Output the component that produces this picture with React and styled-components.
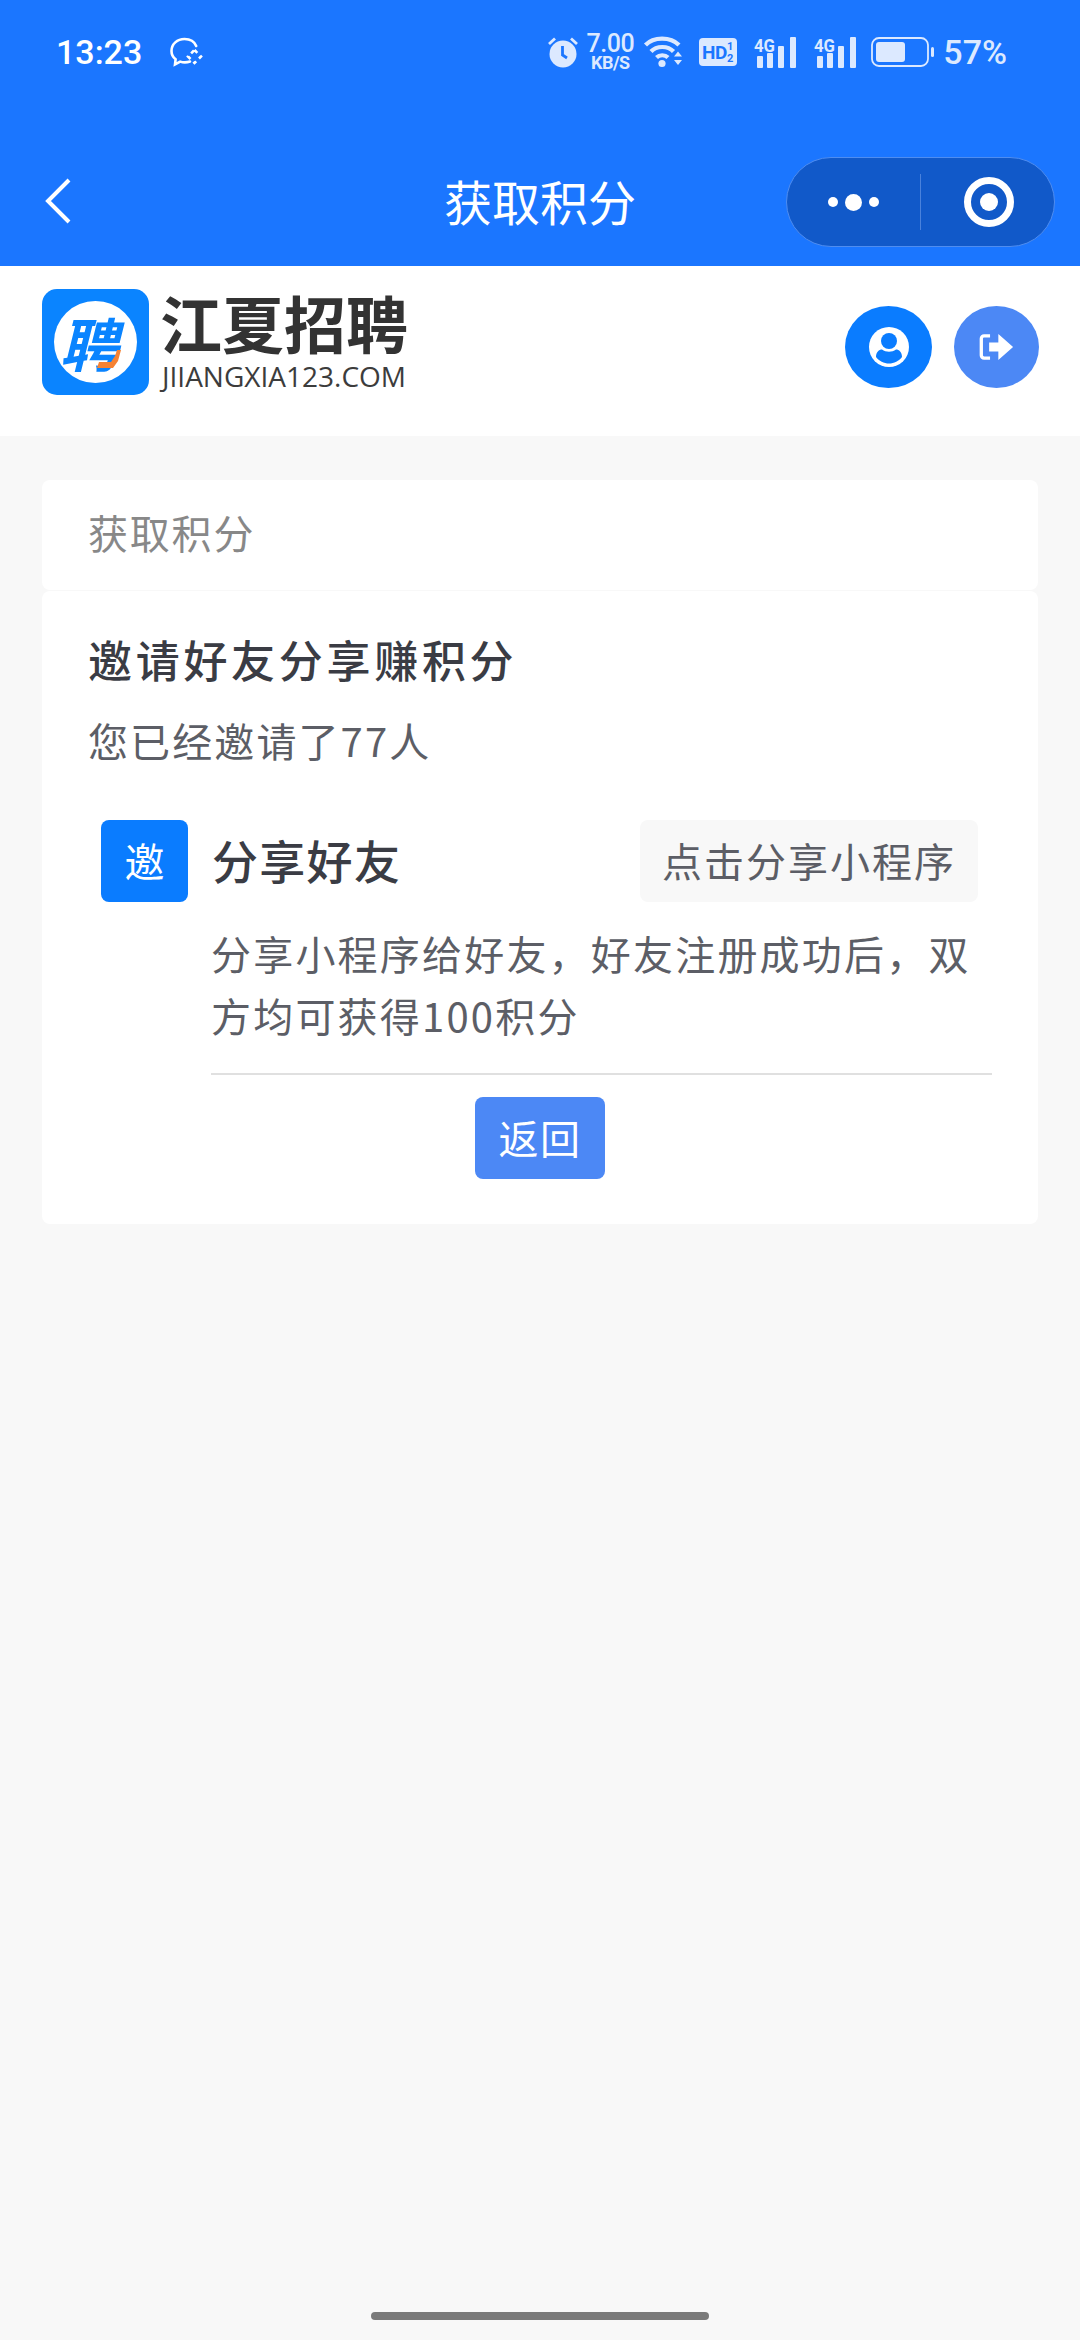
import React from "react";
import styled, { createGlobalStyle } from "styled-components";

const GlobalStyle = createGlobalStyle`
  html, body {
    margin: 0;
    padding: 0;
    background: #f8f8f8;
  }
  * {
    box-sizing: border-box;
  }
`;

const Page = styled.div`
  display: flex;
  flex-direction: column;
  width: 1080px;
  height: 2340px;
  overflow: hidden;
  background: #f8f8f8;
  font-family: "Noto Sans CJK SC", "Noto Sans", sans-serif;
`;

const TopArea = styled.div`
  background: #1b76ff;
  color: #fff;
`;

// Status bar
const StatusBar = styled.div`
  display: flex;
  justify-content: space-between;
  align-items: center;
  height: 138px;
  padding: 0 73px 34px 56px;
`;

const StatusLeft = styled.div`
  display: flex;
  align-items: center;
  gap: 28px;
`;

const Clock = styled.span`
  font-family: Roboto, sans-serif;
  font-weight: 500;
  font-size: 34px;
  line-height: 40px;
`;

const StatusRight = styled.div`
  display: flex;
  align-items: center;
  color: #dce9ff;
`;

const StatusIcon = styled.svg`
  display: block;
  flex: none;
  margin-left: ${(p) => p.$gap || 0}px;
  overflow: visible;
`;

const Speed = styled.div`
  display: flex;
  flex-direction: column;
  align-items: center;
  width: 46px;
  margin-left: 9px;
  font-family: Roboto, sans-serif;
  font-weight: 500;
  letter-spacing: -0.5px;
`;

const SpeedValue = styled.span`
  font-size: 25px;
  line-height: 20px;
`;

const SpeedUnit = styled.span`
  font-size: 18px;
  font-weight: 700;
  line-height: 16px;
  margin-top: 1px;
  white-space: nowrap;
`;

const BatteryText = styled.span`
  margin-left: 9px;
  font-family: Roboto, sans-serif;
  font-weight: 500;
  font-size: 34px;
  line-height: 40px;
`;

// Nav bar
const NavBar = styled.div`
  display: grid;
  grid-template-columns: 1fr auto 1fr;
  align-items: center;
  height: 128px;
`;

const BackButton = styled.svg`
  display: block;
  margin: 0 0 2px 45px;
`;

const NavTitle = styled.div`
  margin-bottom: 4px;
  font-size: 48px;
  line-height: 60px;
  font-weight: 400;
`;

const Capsule = styled.div`
  justify-self: end;
  display: flex;
  align-items: center;
  width: 269px;
  height: 90px;
  margin-right: 25px;
  background: #1159c9;
  border: 1px solid #4f8df0;
  border-radius: 45px;
`;

const CapsuleMore = styled.div`
  display: flex;
  align-items: center;
  justify-content: center;
  gap: 7px;
  width: 134px;
  height: 56px;
  border-right: 1px solid #4a82dc;
`;

const Dot = styled.span`
  width: ${(p) => (p.$big ? 17 : 10)}px;
  height: ${(p) => (p.$big ? 17 : 10)}px;
  border-radius: 50%;
  background: #fff;
`;

const CapsuleClose = styled.div`
  flex: 1;
  display: flex;
  justify-content: center;
  padding-left: 3px;
`;

const Target = styled.div`
  display: flex;
  align-items: center;
  justify-content: center;
  width: 50px;
  height: 50px;
  border: 7px solid #fff;
  border-radius: 50%;

  &::after {
    content: "";
    width: 18px;
    height: 18px;
    border-radius: 50%;
    background: #fff;
  }
`;

// Site header
const SiteHeader = styled.div`
  display: flex;
  justify-content: space-between;
  align-items: flex-start;
  height: 170px;
  padding: 23px 41px 0 42px;
  background: #fff;
`;

const Brand = styled.div`
  display: flex;
  gap: 11px;
`;

const LogoTile = styled.div`
  display: flex;
  align-items: center;
  justify-content: center;
  width: 107px;
  height: 106px;
  background: #0a84ff;
  border-radius: 15px;
`;

const LogoCircle = styled.div`
  position: relative;
  display: flex;
  align-items: center;
  justify-content: center;
  width: 83px;
  height: 82px;
  background: #fff;
  border-radius: 50%;
`;

const LogoGlyph = styled.span`
  font-size: 58px;
  line-height: 60px;
  font-weight: 700;
  color: #0a84ff;
  transform: skewX(-14deg);
`;

const LogoHook = styled.svg`
  position: absolute;
  right: 16px;
  bottom: 14px;
`;

const BrandText = styled.div`
  display: flex;
  flex-direction: column;
`;

const BrandName = styled.div`
  font-size: 62px;
  line-height: 66px;
  font-weight: 700;
  color: #333;
`;

const BrandDomain = styled.div`
  margin: 6px 0 0 2px;
  font-family: "Open Sans", sans-serif;
  font-size: 28px;
  line-height: 30px;
  color: #3c3c3c;
`;

const HeaderActions = styled.div`
  display: flex;
  gap: 22px;
  margin-top: 17px;
`;

const RoundButton = styled.div`
  display: flex;
  align-items: center;
  justify-content: center;
  width: ${(p) => (p.$soft ? 85 : 87)}px;
  height: 82px;
  border-radius: 50%;
  background: ${(p) => (p.$soft ? "#4c88f5" : "#0a7cff")};
`;

// Content
const Main = styled.div`
  display: flex;
  flex-direction: column;
  gap: 1px;
  padding: 44px 42px 0;
`;

const CardHead = styled.div`
  height: 110px;
  padding-left: 46px;
  font-size: 40px;
  line-height: 104px;
  letter-spacing: 1.8px;
  color: #888;
  background: #fff;
  border-radius: 8px;
`;

const CardBody = styled.div`
  padding: 38px 46px 45px;
  background: #fff;
  border-radius: 8px;
`;

const CardTitle = styled.div`
  font-size: 44px;
  line-height: 60px;
  font-weight: 500;
  letter-spacing: 3.7px;
  color: #3a3c44;
`;

const CardSub = styled.div`
  margin-top: 21px;
  font-size: 40px;
  line-height: 60px;
  letter-spacing: 2.1px;
  color: #5c5e66;
`;

const ShareRow = styled.div`
  display: flex;
  align-items: center;
  margin: 50px 14px 0 13px;
`;

const Badge = styled.div`
  display: flex;
  align-items: center;
  justify-content: center;
  width: 87px;
  height: 82px;
  margin-right: 24px;
  padding-bottom: 3px;
  font-size: 40px;
  color: #fff;
  background: #0a7cff;
  border-radius: 8px;
`;

const ShareName = styled.div`
  flex: 1;
  margin-bottom: 5px;
  font-size: 46px;
  line-height: 60px;
  font-weight: 500;
  letter-spacing: 1.3px;
  color: #3a3c44;
`;

const ShareButton = styled.div`
  display: flex;
  align-items: center;
  justify-content: center;
  width: 338px;
  height: 82px;
  padding-bottom: 3px;
  font-size: 40px;
  letter-spacing: 2px;
  color: #5c5e66;
  background: #f8f8f8;
  border-radius: 8px;
`;

const ShareDesc = styled.div`
  margin: 20px 0 0 123px;
  padding-bottom: 27px;
  font-size: 40px;
  line-height: 62px;
  letter-spacing: 2.2px;
  color: #5c5e66;
  border-bottom: 2px solid #e0e0e0;
`;

const BackRow = styled.div`
  display: flex;
  justify-content: center;
  margin-top: 22px;
`;

const ReturnButton = styled.div`
  display: flex;
  align-items: center;
  justify-content: center;
  width: 130px;
  height: 82px;
  padding-bottom: 3px;
  font-size: 40px;
  letter-spacing: 1.6px;
  color: #fff;
  background: #4c88f5;
  border-radius: 8px;
`;

const HomeBar = styled.div`
  flex: none;
  width: 338px;
  height: 8px;
  margin: auto auto 20px;
  background: #7a7a7a;
  border-radius: 4px;
`;

const WeChatStatus = () => (
  <StatusIcon width="33" height="30" viewBox="0 0 33 30" fill="none" stroke="#fff" strokeWidth="2.6">
    <path d="M20 24.5c-1.6.6-3.4.9-5.2.9-1.7 0-3.2-.3-4.6-.8L5 27.5l.6-5.2C2.8 20.2 1.5 17.4 1.5 14 1.5 7 7.300 2 14.500 2c5.500 0 10 2.800 11.700 7" strokeLinecap="round" />
    <path d="M24.500 13l6.500 6.500-6.500 6.500-6.500-6.500z" strokeDasharray="4 4" />
  </StatusIcon>
);

const AlarmIcon = () => (
  <StatusIcon width="30" height="32" viewBox="0 0 30 32">
    <circle cx="15" cy="18" r="13.500" fill="#dce9ff" />
    <path d="M14.500 10v9l4.500 3" stroke="#1b76ff" strokeWidth="2.800" fill="none" />
    <path d="M1 8l6-5.500M29 8l-6-5.500" stroke="#dce9ff" strokeWidth="2.800" fill="none" />
  </StatusIcon>
);

const WifiIcon = () => (
  <StatusIcon $gap={11} width="38" height="32" viewBox="0 0 38 32" fill="none" stroke="#dce9ff" strokeWidth="4.200">
    <path d="M1.500 9C9.500 .5 26.500 .5 35 9" />
    <path d="M7 15.500c5.500-6 17-6 22.500 0" />
    <path d="M12.500 21.500c3-3 8.500-3 11.500 0" />
    <circle cx="18" cy="27.500" r="3.600" fill="#dce9ff" stroke="none" />
    <path d="M32 19.500l4-5 4 5zM32 23l4 5 4-5z" fill="#dce9ff" stroke="none" transform="translate(-2 1)" />
  </StatusIcon>
);

const HdIcon = () => (
  <StatusIcon $gap={17} width="38" height="28" viewBox="0 0 38 28">
    <rect width="38" height="28" rx="4" fill="#dce9ff" />
    <text x="3" y="21" fontFamily="Roboto, sans-serif" fontWeight="700" fontSize="19" letterSpacing="-.5" fill="#1b76ff">HD</text>
    <text x="28" y="11.500" fontFamily="Roboto, sans-serif" fontWeight="700" fontSize="11" fill="#1b76ff">1</text>
    <text x="28" y="24" fontFamily="Roboto, sans-serif" fontWeight="700" fontSize="11" fill="#1b76ff">2</text>
  </StatusIcon>
);

const SignalIcon = ({ gap }) => (
  <StatusIcon $gap={gap} width="43" height="32" viewBox="0 0 43 32" fill="#dce9ff">
    <text x="0" y="16" fontFamily="Roboto, sans-serif" fontWeight="700" fontSize="19" textLength="21" lengthAdjust="spacingAndGlyphs">4G</text>
    <rect x="3" y="20" width="6" height="12" rx="1" />
    <rect x="13" y="17" width="6" height="15" rx="1" />
    <rect x="24" y="10" width="6" height="22" rx="1" />
    <rect x="36" y="1" width="6" height="31" rx="1" />
  </StatusIcon>
);

const BatteryIcon = () => (
  <StatusIcon $gap={14} width="63" height="30" viewBox="0 0 63 30">
    <rect x="1" y="1" width="56" height="28" rx="7" fill="none" stroke="#dce9ff" strokeWidth="1.800" />
    <rect x="5" y="5" width="29" height="20" rx="3" fill="#dce9ff" />
    <rect x="60" y="10" width="3" height="10" rx="1.500" fill="#dce9ff" />
  </StatusIcon>
);

const UserIcon = () => (
  <svg width="42" height="42" viewBox="0 0 42 42">
    <circle cx="21" cy="21" r="20" fill="#fff" />
    <circle cx="21" cy="15" r="8" fill="#0a7cff" />
    <path d="M8 31c0-5 3-7.500 6-7.500 2 1.500 4.500 2.200 7 2.200s5-.7 7-2.200c3 0 6 2.500 6 7.500-3 4-8 6.500-13 6.500S11 35 8 31z" fill="#0a7cff" />
  </svg>
);

const ExitIcon = () => (
  <svg width="35" height="28" viewBox="0 0 38 30">
    <path d="M12 3H5.500A3 3 0 0 0 2.500 6v18a3 3 0 0 0 3 3H12" fill="none" stroke="#fff" strokeWidth="3.600" />
    <path d="M11 10h10V1l16 14-16 14v-9H11z" fill="#fff" />
  </svg>
);

export default function App() {
  return (
    <Page>
      <GlobalStyle />
      <TopArea>
        <StatusBar>
          <StatusLeft>
            <Clock>13:23</Clock>
            <WeChatStatus />
          </StatusLeft>
          <StatusRight>
            <AlarmIcon />
            <Speed>
              <SpeedValue>7.00</SpeedValue>
              <SpeedUnit>KB/S</SpeedUnit>
            </Speed>
            <WifiIcon />
            <HdIcon />
            <SignalIcon gap={17} />
            <SignalIcon gap={17} />
            <BatteryIcon />
            <BatteryText>57%</BatteryText>
          </StatusRight>
        </StatusBar>
        <NavBar>
          <BackButton width="26" height="46" viewBox="0 0 26 46" fill="none" stroke="#fff" strokeWidth="4">
            <path d="M24 2L3 23l21 21" />
          </BackButton>
          <NavTitle>获取积分</NavTitle>
          <Capsule>
            <CapsuleMore>
              <Dot />
              <Dot $big />
              <Dot />
            </CapsuleMore>
            <CapsuleClose>
              <Target />
            </CapsuleClose>
          </Capsule>
        </NavBar>
      </TopArea>

      <SiteHeader>
        <Brand>
          <LogoTile>
            <LogoCircle>
              <LogoGlyph>聘</LogoGlyph>
              <LogoHook width="24" height="20" viewBox="0 0 24 20">
                <path d="M2 13h12l4-6 2-6h4l-3 11-5 7H0z" fill="#f58233" />
              </LogoHook>
            </LogoCircle>
          </LogoTile>
          <BrandText>
            <BrandName>江夏招聘</BrandName>
            <BrandDomain>JIIANGXIA123.COM</BrandDomain>
          </BrandText>
        </Brand>
        <HeaderActions>
          <RoundButton>
            <UserIcon />
          </RoundButton>
          <RoundButton $soft>
            <ExitIcon />
          </RoundButton>
        </HeaderActions>
      </SiteHeader>

      <Main>
        <CardHead>获取积分</CardHead>
        <CardBody>
          <CardTitle>邀请好友分享赚积分</CardTitle>
          <CardSub>您已经邀请了77人</CardSub>
          <ShareRow>
            <Badge>邀</Badge>
            <ShareName>分享好友</ShareName>
            <ShareButton>点击分享小程序</ShareButton>
          </ShareRow>
          <ShareDesc>分享小程序给好友，好友注册成功后，双方均可获得100积分</ShareDesc>
          <BackRow>
            <ReturnButton>返回</ReturnButton>
          </BackRow>
        </CardBody>
      </Main>

      <HomeBar />
    </Page>
  );
}
